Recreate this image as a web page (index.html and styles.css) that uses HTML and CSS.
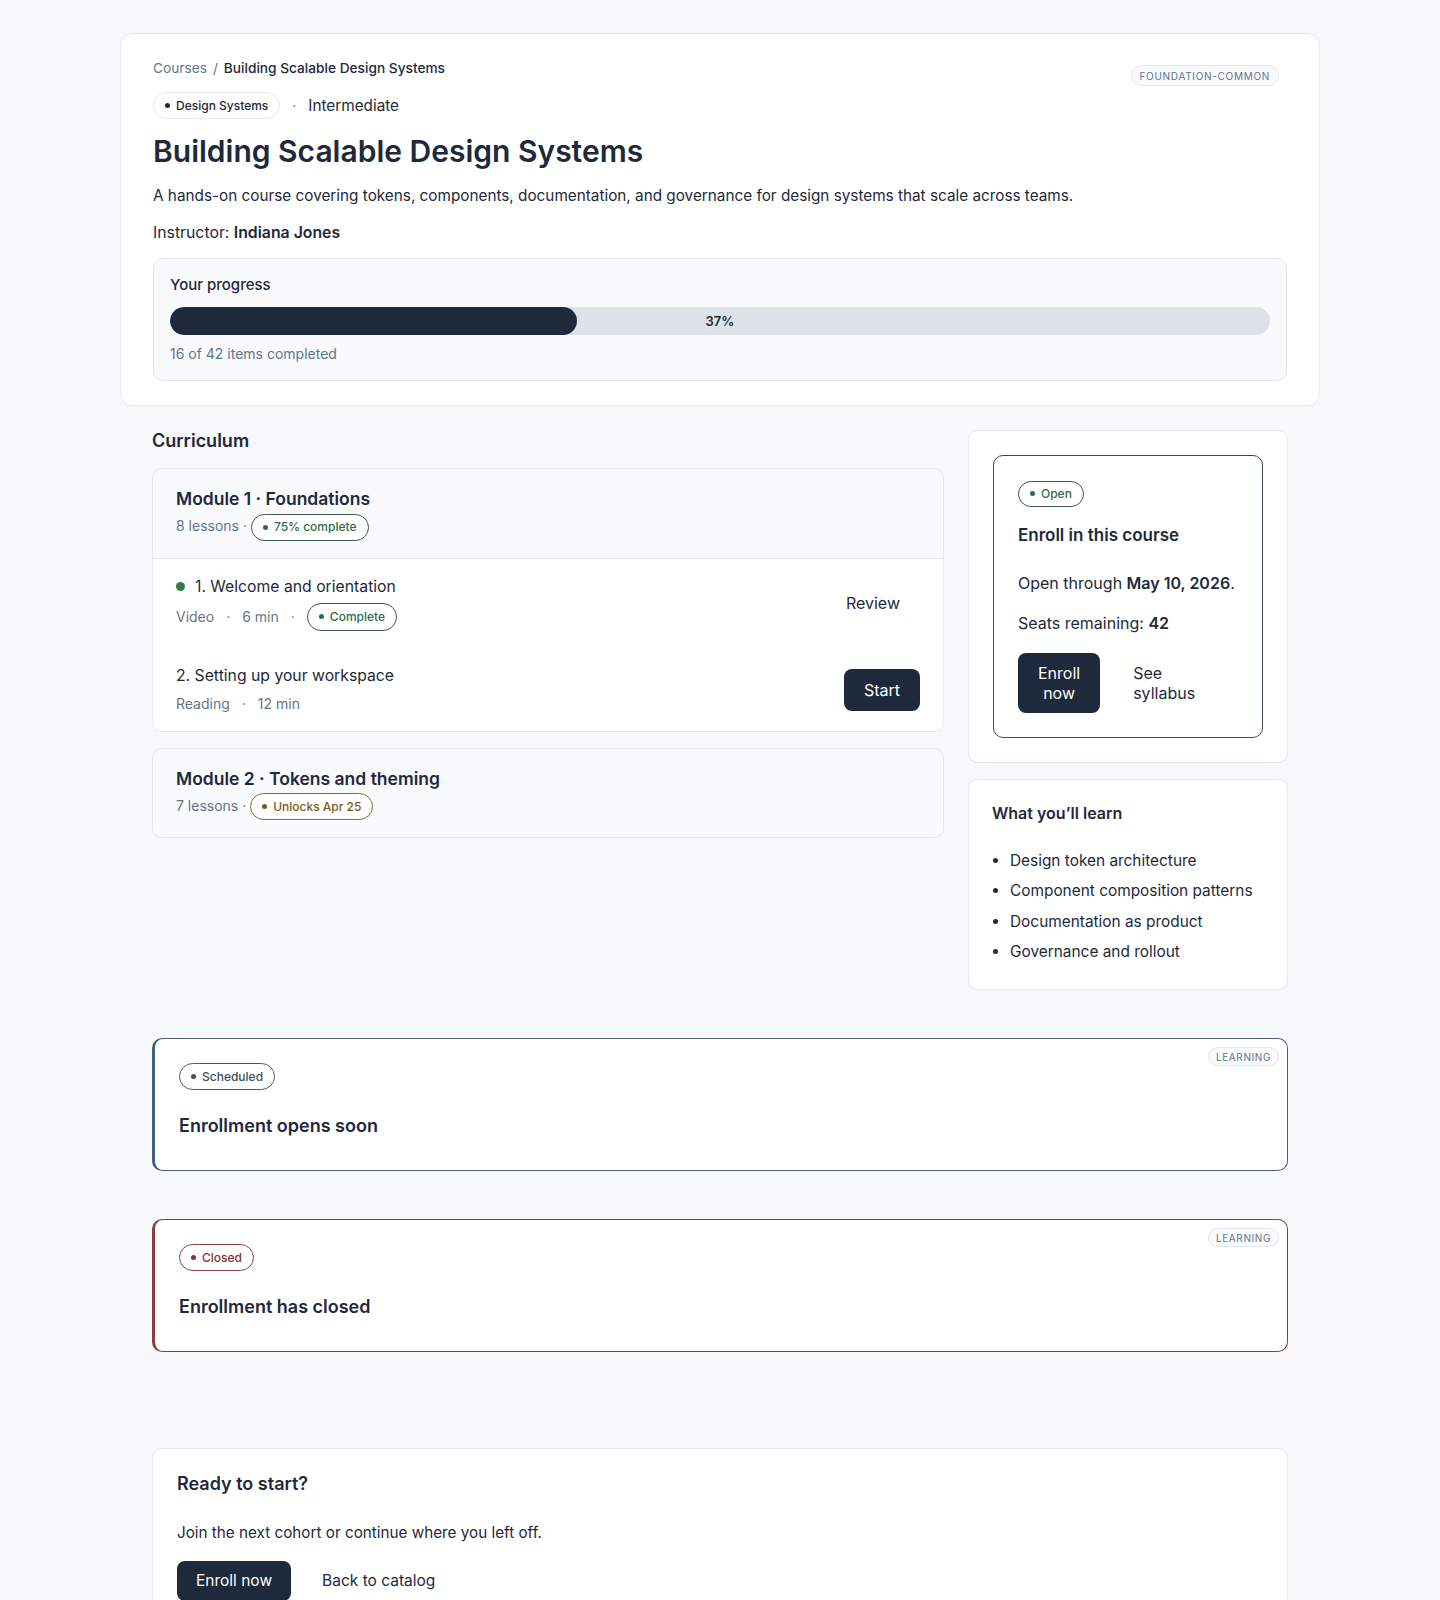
FILE: index.html
```html
<!DOCTYPE html>
<html lang="en">
<head>
<meta charset="utf-8">
<title>Building Scalable Design Systems</title>
<link rel="stylesheet" href="styles.css">
</head>
<body>
<main class="page">
  <section class="hero">
    <span class="tag">foundation-common</span>
    <nav class="crumbs"><a href="#">Courses</a><span class="sep">/</span><span class="here">Building Scalable Design Systems</span></nav>
    <div class="meta-row">
      <span class="pill pill-neutral">Design Systems</span>
      <span class="dot-sep">·</span>
      <span class="level">Intermediate</span>
    </div>
    <h1 class="title">Building Scalable Design Systems</h1>
    <p class="lead">A hands-on course covering tokens, components, documentation, and governance for design systems that scale across teams.</p>
    <p class="instructor">Instructor: <strong>Indiana Jones</strong></p>
    <div class="progress">
      <div class="progress-label">Your progress</div>
      <div class="bar"><div class="bar-fill" style="width:37%"></div><span class="bar-value">37%</span></div>
      <div class="progress-note">16 of 42 items completed</div>
    </div>
  </section>

  <div class="content">
    <div class="layout">
      <section class="curriculum">
        <h2 class="section-title">Curriculum</h2>
        <article class="module">
          <header class="module-head">
            <h3 class="module-title">Module 1 · Foundations</h3>
            <div class="module-meta">8 lessons · <span class="pill pill-green">75% complete</span></div>
          </header>
          <ul class="lessons">
            <li class="lesson">
              <div class="lesson-info">
                <div class="lesson-title"><span class="done-dot"></span>1. Welcome and orientation</div>
                <div class="lesson-meta"><span>Video</span><span>·</span><span>6 min</span><span>·</span><span class="pill pill-green">Complete</span></div>
              </div>
              <button class="btn btn-ghost">Review</button>
            </li>
            <li class="lesson">
              <div class="lesson-info">
                <div class="lesson-title">2. Setting up your workspace</div>
                <div class="lesson-meta plain"><span>Reading</span><span>·</span><span>12 min</span></div>
              </div>
              <button class="btn btn-primary">Start</button>
            </li>
          </ul>
        </article>
        <article class="module">
          <header class="module-head last">
            <h3 class="module-title">Module 2 · Tokens and theming</h3>
            <div class="module-meta">7 lessons · <span class="pill pill-amber">Unlocks Apr 25</span></div>
          </header>
        </article>
      </section>

      <aside class="side">
        <div class="card enroll-card">
          <div class="enroll-box">
            <span class="pill pill-green">Open</span>
            <h3 class="enroll-title">Enroll in this course</h3>
            <p class="enroll-text">Open through <strong>May 10, 2026</strong>.</p>
            <p class="enroll-text">Seats remaining: <strong>42</strong></p>
            <div class="enroll-actions">
              <button class="btn btn-primary narrow">Enroll now</button>
              <button class="btn btn-ghost narrow">See syllabus</button>
            </div>
          </div>
        </div>
        <div class="card learn-card">
          <h3 class="learn-title">What you’ll learn</h3>
          <ul class="learn-list">
            <li>Design token architecture</li>
            <li>Component composition patterns</li>
            <li>Documentation as product</li>
            <li>Governance and rollout</li>
          </ul>
        </div>
      </aside>
    </div>

    <section class="status status-scheduled">
      <span class="tag tag-sm">learning</span>
      <span class="pill pill-slate">Scheduled</span>
      <h3 class="status-title">Enrollment opens soon</h3>
    </section>

    <section class="status status-closed">
      <span class="tag tag-sm">learning</span>
      <span class="pill pill-red">Closed</span>
      <h3 class="status-title">Enrollment has closed</h3>
    </section>

    <section class="card cta">
      <h3 class="cta-title">Ready to start?</h3>
      <p class="cta-text">Join the next cohort or continue where you left off.</p>
      <div class="cta-actions">
        <button class="btn btn-primary small">Enroll now</button>
        <button class="btn btn-ghost small">Back to catalog</button>
      </div>
    </section>
  </div>
</main>
</body>
</html>
```

FILE: styles.css
```css
* { box-sizing: border-box; }

body {
  margin: 0;
  background: #f6f8fa;
  color: #1e293b;
  font-family: Inter, "Noto Sans", "Liberation Sans", sans-serif;
  font-size: 16px;
  line-height: 24px;
}

h1, h2, h3, p, ul { margin: 0; padding: 0; }

.page {
  width: 1200px;
  margin: 33px auto 0;
}

/* ---------- hero ---------- */
.hero {
  position: relative;
  display: flex;
  flex-direction: column;
  gap: 14px;
  padding: 24px 32px;
  background: #fff;
  border: 1px solid #e3e8ee;
  border-radius: 12px;
}

.tag {
  position: absolute;
  top: 31px;
  right: 40px;
  display: inline-flex;
  align-items: center;
  height: 21px;
  padding: 0 8px;
  border: 1px solid #e2e8f0;
  border-radius: 999px;
  background: #f8fafc;
  color: #64748b;
  font-size: 10px;
  line-height: 1;
  letter-spacing: 0.07em;
  text-transform: uppercase;
}
.tag-sm {
  top: 8px;
  right: 8px;
  height: 19px;
  padding: 0 7px;
  letter-spacing: 0.06em;
}

.crumbs {
  font-size: 13.7px;
  line-height: 20px;
  color: #64748b;
}
.crumbs a { color: #64748b; text-decoration: none; }
.crumbs .sep { margin: 0 6px; }
.crumbs .here { color: #1e293b; font-weight: 500; }

.meta-row {
  display: flex;
  align-items: center;
  gap: 12px;
  height: 27px;
}
.dot-sep { color: #64748b; font-size: 14px; }
.level { font-size: 15.3px; color: #1e293b; }

.title {
  font-size: 30px;
  line-height: 36px;
  font-weight: 600;
  color: #1e293b;
  margin-bottom: 1px;
}
.lead { font-size: 15.3px; line-height: 24px; color: #1e293b; }
.instructor { font-size: 15.8px; line-height: 24px; margin-top: -1px; }
.instructor strong { font-weight: 600; }

.progress {
  padding: 16px;
  margin-top: -1px;
  background: #f8fafc;
  border: 1px solid #e2e8f0;
  border-radius: 10px;
}
.progress-label {
  font-size: 15px;
  line-height: 20px;
  font-weight: 500;
  margin-bottom: 12px;
}
.bar {
  position: relative;
  height: 28px;
  border-radius: 999px;
  background: #dde2e9;
  overflow: hidden;
  display: flex;
  align-items: center;
  justify-content: center;
}
.bar-fill {
  position: absolute;
  left: 0;
  top: 0;
  bottom: 0;
  background: #1e293b;
  border-radius: 999px;
}
.bar-value {
  position: relative;
  font-size: 13px;
  font-weight: 600;
  color: #1e293b;
}
.progress-note {
  margin-top: 9px;
  font-size: 14px;
  line-height: 20px;
  color: #64748b;
}

/* ---------- pills ---------- */
.pill {
  display: inline-flex;
  align-items: center;
  gap: 6px;
  height: 27px;
  padding: 0 11px;
  border: 1px solid #e2e8f0;
  border-radius: 999px;
  background: #fff;
  font-size: 12px;
  line-height: 1;
  font-weight: 500;
  white-space: nowrap;
  vertical-align: middle;
}
.pill::before {
  content: "";
  width: 5px;
  height: 5px;
  border-radius: 50%;
  background: currentColor;
}
.pill-neutral { color: #1e293b; border-color: #e2e8f0; }
.pill-green { color: #2f6b4a; border-color: #3c5a49; }
.pill-amber { color: #7c5a14; border-color: #8a6a33; }
.pill-slate { color: #3e4d60; border-color: #4a5a6d; }
.pill-red { color: #8b2f33; border-color: #8e4145; }

/* ---------- buttons ---------- */
.btn {
  font-family: inherit;
  font-size: 16px;
  line-height: 20px;
  padding: 10px 20px;
  border-radius: 8px;
  border: 0;
  cursor: pointer;
}
.btn.small { font-size: 15.5px; padding: 10px 19px; }
.btn-primary { background: #1e293b; color: #fff; }
.btn-ghost { background: transparent; color: #1e293b; }
.narrow { width: min-content; text-align: center; }
.btn-ghost.narrow { text-align: left; }

/* ---------- main layout ---------- */
.content {
  padding: 0 32px 40px;
}
.layout {
  display: grid;
  grid-template-columns: 1fr 320px;
  gap: 24px;
  align-items: start;
  margin-top: 24px;
}

.section-title {
  font-size: 18px;
  line-height: 20px;
  font-weight: 600;
  margin-top: 1px;
  margin-bottom: 17px;
}

.module {
  background: #fff;
  border: 1px solid #e2e8f0;
  border-radius: 10px;
  overflow: hidden;
}
.module + .module { margin-top: 16px; }
.module-head {
  padding: 17px 23px 17px;
  background: #f8fafc;
  border-bottom: 1px solid #e2e8f0;
}
.module-head.last { border-bottom: 0; }
.module-title {
  font-size: 17.5px;
  line-height: 26px;
  font-weight: 600;
}
.module-meta {
  font-size: 14px;
  line-height: 27px;
  color: #64748b;
}

.lessons { list-style: none; }
.lesson {
  display: flex;
  align-items: center;
  justify-content: space-between;
  padding: 16px 23px;
}
.lesson + .lesson { padding-top: 17px; padding-bottom: 15px; }
.lesson-title {
  display: flex;
  align-items: center;
  gap: 10px;
  font-size: 15.75px;
  line-height: 24px;
}
.done-dot {
  width: 9px;
  height: 9px;
  border-radius: 50%;
  background: #2f7a4f;
}
.lesson-meta {
  display: flex;
  align-items: center;
  gap: 12px;
  margin-top: 4px;
  min-height: 24px;
  font-size: 14px;
  color: #64748b;
}
.lesson-meta .pill { height: 28px; }
.lesson .btn-primary { padding: 11px 20px; }

/* ---------- sidebar ---------- */
.side {
  display: flex;
  flex-direction: column;
  gap: 16px;
}
.card {
  background: #fff;
  border: 1px solid #e2e8f0;
  border-radius: 10px;
}
.enroll-card { padding: 24px; }
.enroll-box {
  padding: 24px;
  border: 1px solid #3c4a57;
  border-radius: 10px;
}
.enroll-box .pill { height: 26px; }
.enroll-title {
  margin-top: 16px;
  font-size: 17px;
  line-height: 24px;
  font-weight: 600;
}
.enroll-text {
  margin-top: 24px;
  font-size: 16px;
  line-height: 24px;
}
.enroll-text + .enroll-text { margin-top: 16px; }
.enroll-text strong { font-weight: 600; }
.enroll-actions {
  display: flex;
  gap: 13px;
  margin-top: 18px;
}

.learn-card { padding: 21px 23px 25px; }
.learn-title {
  font-size: 16px;
  line-height: 24px;
  font-weight: 600;
}
.learn-list {
  margin-top: 24px;
  padding-left: 18px;
  font-size: 15.4px;
  line-height: 24px;
}
.learn-list li + li { margin-top: 6.5px; }
.learn-list li::marker { color: #1e293b; }

/* ---------- status banners ---------- */
.status {
  position: relative;
  margin-top: 48px;
  padding: 24px 24px 31px;
  background: #fff;
  border: 1px solid;
  border-left-width: 3px;
  border-radius: 10px;
}
.status-scheduled { border-color: #46607b; }
.status-closed { border-color: #8e3c40; }
.status-title {
  margin-top: 23px;
  font-size: 18px;
  line-height: 26px;
  font-weight: 600;
}

/* ---------- call to action ---------- */
.cta {
  margin-top: 96px;
  padding: 23px 24px 24px;
}
.cta-title {
  font-size: 18px;
  line-height: 24px;
  font-weight: 600;
}
.cta-text {
  margin-top: 26px;
  font-size: 15.25px;
  line-height: 22px;
}
.cta-actions {
  display: flex;
  gap: 12px;
  margin-top: 17px;
}
```
